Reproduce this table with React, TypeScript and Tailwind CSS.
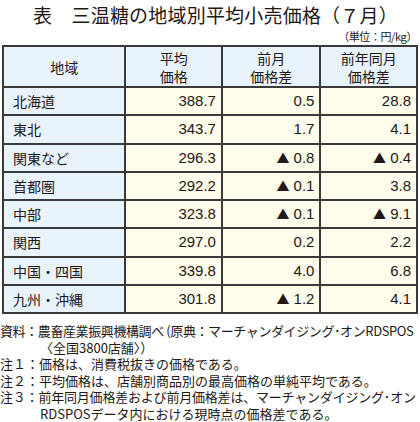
import React from "react";

const rows: [string, string, string, string][] = [
  ["北海道", "388.7", "0.5", "28.8"],
  ["東北", "343.7", "1.7", "4.1"],
  ["関東など", "296.3", "▲ 0.8", "▲ 0.4"],
  ["首都圏", "292.2", "▲ 0.1", "3.8"],
  ["中部", "323.8", "▲ 0.1", "▲ 9.1"],
  ["関西", "297.0", "0.2", "2.2"],
  ["中国・四国", "339.8", "4.0", "6.8"],
  ["九州・沖縄", "301.8", "▲ 1.2", "4.1"],
];

const jp = "font-['Noto_Sans_CJK_JP',sans-serif]";
const num = "font-['Liberation_Sans','Noto_Sans_CJK_JP',sans-serif]";

function Num({ v }: { v: string }) {
  if (v.startsWith("▲")) {
    return (
      <span>
        <span className={`${jp} text-[13px]`}>▲</span>
        <span> {v.slice(2)}</span>
      </span>
    );
  }
  return <span>{v}</span>;
}

const cell = "border-2 border-[#3a3a3a]";

export default function App() {
  return (
    <div className={`w-[420px] h-[422px] bg-white text-[#231815] ${jp} overflow-hidden`}>
      <div className="pt-[2px] pl-[11px] text-center text-[19px] tracking-[0.2px] leading-[26px]">
        表　三温糖の地域別平均小売価格（７月）
      </div>
      <div className="text-right pr-[3px] text-[11px] tracking-[-0.4px] leading-[12px] mt-[2px]">
        （単位：円/kg）
      </div>
      <table className="mt-[3px] ml-[2px] w-[416px] border-collapse border-2 border-[#3a3a3a] text-[14px]">
        <colgroup>
          <col className="w-[123px]" />
          <col className="w-[97px]" />
          <col className="w-[99px]" />
          <col className="w-[97px]" />
        </colgroup>
        <thead>
          <tr className="h-[41px] bg-[#e8f3fc] leading-[18px]">
            <th className={`${cell} font-normal`}>地域</th>
            <th className={`${cell} font-normal`}>平均<br />価格</th>
            <th className={`${cell} font-normal`}>前月<br />価格差</th>
            <th className={`${cell} font-normal`}>前年同月<br />価格差</th>
          </tr>
        </thead>
        <tbody>
          {rows.map((r) => (
            <tr key={r[0]} className="h-[28.25px]">
              <td className={`${cell} bg-[#e8f3fc] pl-[9px] leading-[20px]`}>{r[0]}</td>
              <td className={`${cell} bg-[#fffcec] text-right pr-[5px] ${num} text-[15px] leading-[20px]`}><Num v={r[1]} /></td>
              <td className={`${cell} bg-[#fffcec] text-right pr-[5px] ${num} text-[15px] leading-[20px]`}><Num v={r[2]} /></td>
              <td className={`${cell} bg-[#fffcec] text-right pr-[5px] ${num} text-[15px] leading-[20px]`}><Num v={r[3]} /></td>
            </tr>
          ))}
        </tbody>
      </table>
      <div className="mt-[9px] text-[13px] leading-[16.5px]">
        <div className="whitespace-nowrap tracking-[-0.4px]">資料：農畜産業振興機構調べ (原典：マーチャンダイジング･オンRDSPOS</div>
        <div className="pl-[40px] whitespace-nowrap">〈全国3800店舗〉）</div>
        <div className="whitespace-nowrap">注１：価格は、消費税抜きの価格である。</div>
        <div className="whitespace-nowrap">注２：平均価格は、店舗別商品別の最高価格の単純平均である。</div>
        <div className="whitespace-nowrap tracking-[-0.2px]">注３：前年同月価格差および前月価格差は、マーチャンダイジング･オン</div>
        <div className="pl-[40px] whitespace-nowrap">RDSPOSデータ内における現時点の価格差である。</div>
      </div>
    </div>
  );
}
